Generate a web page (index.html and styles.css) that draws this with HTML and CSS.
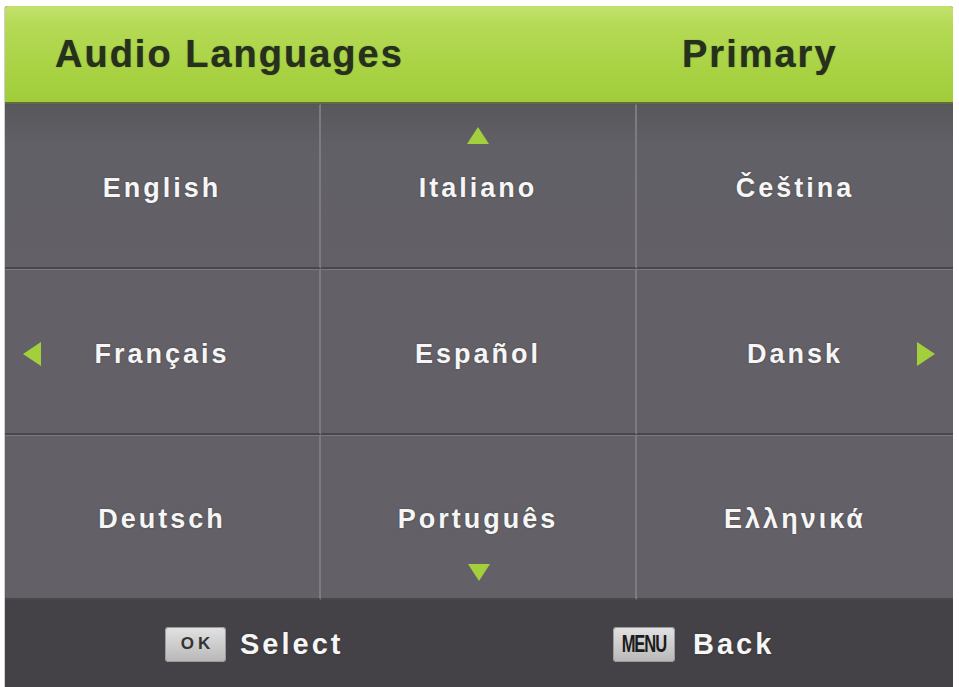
FILE: index.html
```html
<!DOCTYPE html>
<html lang="en">
<head>
<meta charset="utf-8">
<title>Audio Languages</title>
<link rel="stylesheet" href="styles.css">
</head>
<body>
<div class="panel">
  <header class="head">
    <div class="title">Audio Languages</div>
    <div class="title">Primary</div>
  </header>
  <div class="grid">
    <div class="cell">English</div>
    <div class="cell">
      <svg class="arrow up" viewBox="0 0 22 17"><polygon points="11,0 22,17 0,17"/></svg>
      Italiano
    </div>
    <div class="cell">Čeština</div>
    <div class="cell">
      <svg class="arrow left" viewBox="0 0 18 24"><polygon points="0,12 18,0 18,24"/></svg>
      Français
    </div>
    <div class="cell">Español</div>
    <div class="cell">
      Dansk
      <svg class="arrow right" viewBox="0 0 18 24"><polygon points="18,12 0,0 0,24"/></svg>
    </div>
    <div class="cell">Deutsch</div>
    <div class="cell">
      Português
      <svg class="arrow down" viewBox="0 0 22 17"><polygon points="0,0 22,0 11,17"/></svg>
    </div>
    <div class="cell">Ελληνικά</div>
  </div>
  <footer class="foot">
    <div class="hint"><span class="key key-ok">OK</span><span class="label">Select</span></div>
    <div class="hint"><span class="key key-menu"><span class="menu-text">MENU</span></span><span class="label">Back</span></div>
  </footer>
</div>
</body>
</html>
```

FILE: styles.css
```css
html, body {
  margin: 0;
  padding: 0;
  background: #ffffff;
}
body {
  font-family: "Liberation Sans", Arial, sans-serif;
  width: 959px;
  height: 687px;
  overflow: hidden;
}
.panel {
  margin: 6px 0 0 5px;
  width: 948px;
  height: 690px;
  background: #444247;
  border-radius: 3px 3px 0 0;
  box-shadow: -1px 0 0 #cfcfcf;
  display: flex;
  flex-direction: column;
}
.head {
  height: 96px;
  flex: none;
  display: grid;
  grid-template-columns: 627px 1fr;
  align-items: center;
  padding-left: 50px;
  background: linear-gradient(#c4e16c 0%, #b5da56 20%, #a8d242 70%, #a0cc3a 100%);
  border-bottom: 2px solid #5f6b3a;
  border-radius: 3px 3px 0 0;
}
.title {
  font-weight: bold;
  font-size: 38px;
  letter-spacing: 2px;
  color: #27301c;
  text-shadow: 0 0 1px rgba(30, 40, 20, 0.6);
}
.grid {
  flex: none;
  display: grid;
  grid-template-columns: repeat(3, 316px);
  grid-template-rows: 165px 166px 165px;
}
.cell {
  position: relative;
  display: flex;
  align-items: center;
  justify-content: center;
  padding-top: 5px;
  box-sizing: border-box;
  background: #636167;
  border-top: 1px solid #7b797f;
  border-bottom: 2px solid #49474c;
  border-right: 2px solid #7d7b81;
  color: #f6f6f6;
  font-weight: bold;
  font-size: 27px;
  letter-spacing: 3px;
  text-shadow: 0 0 2px rgba(40, 40, 40, 0.5);
}
.cell:nth-child(3n) {
  border-right: 0;
}
.cell:nth-child(-n+3) {
  border-top-color: #555459;
  background: linear-gradient(#58575c 0%, #616066 25%, #636167 100%);
}
.arrow {
  position: absolute;
  fill: #a3cf3d;
}
.arrow.up {
  width: 22px;
  height: 17px;
  left: 146px;
  top: 22px;
}
.arrow.down {
  width: 22px;
  height: 17px;
  left: 147px;
  top: 128px;
}
.arrow.left {
  width: 20px;
  height: 24px;
  left: 17px;
  top: 72px;
}
.arrow.right {
  width: 20px;
  height: 24px;
  left: 279px;
  top: 72px;
}
.foot {
  flex: none;
  height: 85px;
  display: grid;
  grid-template-columns: 448px auto;
  align-items: center;
  padding-left: 160px;
  padding-top: 3px;
  box-sizing: border-box;
  background: #444247;
}
.hint {
  display: flex;
  align-items: center;
  gap: 14px;
}
.key {
  display: flex;
  align-items: center;
  justify-content: center;
  height: 35px;
  border-radius: 4px;
  background: linear-gradient(#e2e2e2, #c9c9c9 60%, #b7b7b7);
  color: #2b2b2b;
  box-shadow: inset 0 0 0 1px #9c9c9c;
  overflow: hidden;
}
.key-ok {
  width: 61px;
  font-size: 17px;
  font-weight: bold;
  letter-spacing: 4px;
  padding-left: 4px;
  box-sizing: border-box;
  color: #333333;
}
.key-menu {
  width: 62px;
  margin-right: 4px;
}
.menu-text {
  display: inline-block;
  font-weight: bold;
  font-size: 23px;
  letter-spacing: -1.5px;
  color: #1c1c1c;
  transform: scaleX(0.72);
}
.label {
  color: #f6f6f6;
  font-weight: bold;
  font-size: 29px;
  letter-spacing: 3px;
  text-shadow: 0 0 2px rgba(30, 30, 30, 0.5);
}
```
